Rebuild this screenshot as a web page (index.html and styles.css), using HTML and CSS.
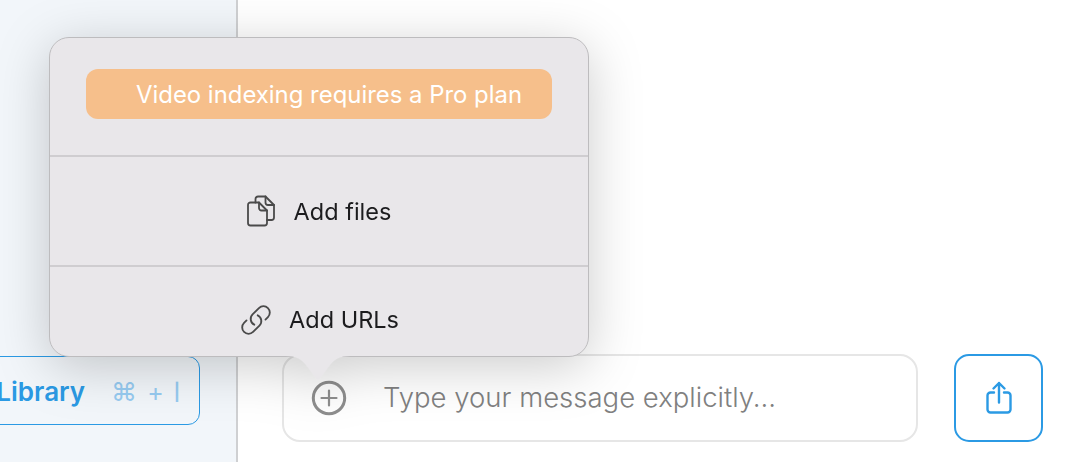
FILE: index.html
```html
<!DOCTYPE html>
<html>
<head>
  <meta charset="utf-8">
  <title>Chat</title>
  <link rel="stylesheet" href="styles.css">
</head>
<body>
  <div class="app">
    <div class="sidebar">
      <button class="library-btn">
        <span class="library-label">Library</span>
        <span class="shortcut">
          <span class="shortcut-cmd">⌘</span>
          <span>+</span>
          <span class="shortcut-bar">|</span>
        </span>
      </button>
    </div>

    <div class="main">
      <div class="composer">
        <svg class="plus-icon" width="36" height="36" viewBox="0 0 36 36" fill="none" stroke="#8e8e8e">
          <circle cx="18" cy="18" r="15.7" stroke-width="3"/>
          <path d="M18 10.5v15M10.5 18h15" stroke-width="2.2" stroke-linecap="round"/>
        </svg>
        <span class="placeholder">Type your message explicitly...</span>
      </div>
      <button class="share-btn">
        <svg width="28" height="34" viewBox="0 0 28 34" fill="none" stroke="#2b9ae4" stroke-width="2.4" stroke-linecap="round" stroke-linejoin="round">
          <path d="M9 11.5H5.5a3 3 0 0 0-3 3v14a3 3 0 0 0 3 3h17a3 3 0 0 0 3-3v-14a3 3 0 0 0-3-3H19"/>
          <path d="M14 21.5V2M8.5 7.5L14 2l5.500 5.500"/>
        </svg>
      </button>
    </div>
  </div>

  <div class="popover">
    <svg class="popover-arrow" width="64" height="26" viewBox="0 0 64 26">
      <path d="M0 0C10 0 15 3 20 9L29 21C31 24.500 33 24.500 35 21L44 9C49 3 54 0 64 0Z" fill="#e9e7ea"/>
    </svg>
    <div class="popover-body">
      <div class="popover-row upgrade-row">
        <div class="upgrade-pill">Video indexing requires a Pro plan</div>
      </div>
      <div class="popover-row files-row">
        <svg width="28" height="32" viewBox="0 0 28 32" fill="none" stroke="#4a4a4a" stroke-width="1.8" stroke-linecap="round" stroke-linejoin="round">
          <path d="M3.500 7.500H12L20 15.500V28a2.500 2.500 0 0 1-2.500 2.500h-14A2.500 2.500 0 0 1 1 28V10a2.500 2.500 0 0 1 2.500-2.500Z"/>
          <path d="M12 7.500V13a2.500 2.500 0 0 0 2.500 2.500H20"/>
          <path d="M8.500 7.500V4a2.500 2.500 0 0 1 2.500-2.500h7.500L27 10v12.500a2.500 2.500 0 0 1-2.500 2.500H20"/>
          <path d="M18.500 1.500V7.500a2.500 2.500 0 0 0 2.500 2.500H27"/>
        </svg>
        <span>Add files</span>
      </div>
      <div class="popover-row urls-row">
        <svg width="34" height="34" viewBox="0 0 24 24" fill="none" stroke="#4a4a4a" stroke-width="1.3" stroke-linecap="round" stroke-linejoin="round">
          <path d="M13.190 8.688a4.500 4.500 0 0 1 1.242 7.244l-4.500 4.500a4.500 4.500 0 0 1-6.364-6.364l1.757-1.757m13.350-.622l1.757-1.757a4.500 4.500 0 0 0-6.364-6.364l-4.500 4.500a4.500 4.500 0 0 0 1.242 7.244"/>
        </svg>
        <span>Add URLs</span>
      </div>
    </div>
  </div>
</body>
</html>
```

FILE: styles.css
```css
body {
  margin: 0;
  font-family: Inter, "Liberation Sans", sans-serif;
  background: #ffffff;
  overflow: hidden;
}

.app {
  height: 462px;
  display: flex;
}

.sidebar {
  width: 200px;
  flex-shrink: 0;
  padding: 0 36px 37px 0;
  background: #f2f6fa;
  border-right: 2px solid #cfd0d2;
  display: flex;
  flex-direction: column;
  justify-content: flex-end;
  align-items: flex-end;
  overflow: hidden;
}

.library-btn {
  flex-shrink: 0;
  width: 260px;
  height: 69px;
  box-sizing: border-box;
  padding: 2px 19px 0 0;
  display: flex;
  align-items: center;
  justify-content: flex-end;
  gap: 26px;
  background: transparent;
  border: 1.5px solid #2b9ae4;
  border-radius: 12px;
  font-family: inherit;
}

.library-label {
  font-size: 26px;
  font-weight: 600;
  color: #2b9ae4;
}

.shortcut {
  display: flex;
  align-items: center;
  gap: 10px;
  font-size: 25px;
  color: #97cbf1;
}

.shortcut-cmd {
  font-size: 26px;
}

.shortcut-bar {
  font-size: 17px;
  font-weight: 700;
}

.main {
  flex: 1;
  display: flex;
  align-items: flex-end;
  gap: 36px;
  padding: 0 41px 20px 44px;
}

.composer {
  flex: 1;
  height: 88px;
  box-sizing: border-box;
  display: flex;
  align-items: center;
  gap: 36px;
  padding: 0 0 2px 27px;
  border: 2px solid #e6e6e6;
  border-radius: 18px;
}

.plus-icon {
  flex-shrink: 0;
  margin-top: 2px;
}

.placeholder {
  font-size: 27.500px;
  font-weight: 300;
  color: #808080;
  white-space: nowrap;
}

.share-btn {
  width: 89px;
  height: 88px;
  flex-shrink: 0;
  display: flex;
  align-items: center;
  justify-content: center;
  padding: 0;
  background: #ffffff;
  border: 2px solid #2b9ae4;
  border-radius: 15px;
}

.popover {
  position: absolute;
  left: 49px;
  top: 37px;
  width: 540px;
  height: 320px;
  filter: drop-shadow(0 10px 26px rgba(0, 0, 0, 0.2));
}

.popover-arrow {
  position: absolute;
  left: 237px;
  top: 319px;
}

.popover-body {
  height: 100%;
  box-sizing: border-box;
  display: flex;
  flex-direction: column;
  background: #e9e7ea;
  border: 1px solid #bdbcbe;
  border-radius: 20px;
  overflow: hidden;
}

.popover-row {
  display: flex;
  align-items: center;
  justify-content: center;
  gap: 20px;
  font-size: 23.500px;
  color: #1c1c1e;
}

.upgrade-row {
  height: 119px;
  flex-shrink: 0;
  box-sizing: border-box;
  border-bottom: 2px solid #cfcdd0;
  padding: 0 36px 5px;
}

.upgrade-pill {
  flex: 1;
  height: 50px;
  display: flex;
  align-items: center;
  box-sizing: border-box;
  padding-left: 50px;
  background: #f6bf8b;
  border-radius: 12px;
  font-size: 23.900px;
  color: #ffffff;
}

.files-row {
  height: 110px;
  flex-shrink: 0;
  gap: 19px;
  box-sizing: border-box;
  border-bottom: 2px solid #cfcdd0;
}

.urls-row {
  flex: 1;
  gap: 16px;
  box-sizing: border-box;
  padding-top: 16px;
}
```
